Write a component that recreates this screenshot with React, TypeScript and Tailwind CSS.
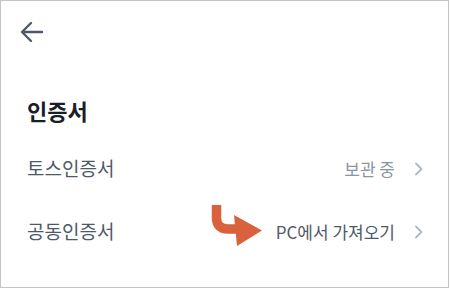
function BackArrow() {
  return (
    <svg width="24" height="22" viewBox="0 0 24 22" fill="none">
      <path d="M22 11H2.5M11 2L2 11l9 9" stroke="#4e5968" strokeWidth="2.4" strokeLinecap="round" strokeLinejoin="round" />
    </svg>
  );
}

function Chevron() {
  return (
    <svg width="10" height="14" viewBox="0 0 10 14" fill="none">
      <path d="M2 1.5L7.5 7 2 12.5" stroke="#b0b8c1" strokeWidth="1.8" strokeLinecap="round" strokeLinejoin="round" />
    </svg>
  );
}

function PointerArrow() {
  return (
    <svg width="56" height="46" viewBox="0 0 56 46" fill="none">
      <path d="M6.5 2v13c0 7 4 11 11 11H31" stroke="#d9623d" strokeWidth="9.5" />
      <path d="M24 12l28 15.5L27 43z" fill="#d9623d" />
    </svg>
  );
}

function Row({ label, value, valueClass, children }: { label: string; value: string; valueClass: string; children?: React.ReactNode }) {
  return (
    <div className="relative flex h-[63px] items-center justify-between">
      <span className="text-[19px] text-[#4e5968]">{label}</span>
      <div className="flex items-center gap-[19px]">
        <span className={`text-[17px] ${valueClass}`}>{value}</span>
        <Chevron />
      </div>
      {children}
    </div>
  );
}

export default function App() {
  return (
    <div
      className="h-[288px] w-[449px] border border-[#c4c4c4] bg-white"
      style={{ fontFamily: '"Noto Sans CJK KR", "Noto Sans", sans-serif' }}
    >
      <div className="flex h-[61px] items-center pl-[19px]">
        <BackArrow />
      </div>
      <div className="pl-[26px] pr-[24px]">
        <h1 className="mt-[33px] h-[30px] text-[22px] font-bold leading-[30px] text-[#191f28]">인증서</h1>
        <div className="mt-[12px]">
          <Row label="토스인증서" value="보관 중" valueClass="text-[#8b95a1]" />
          <Row label="공동인증서" value="PC에서 가져오기" valueClass="text-[#4e5968]">
            <div className="absolute left-[183px] top-[3px]">
              <PointerArrow />
            </div>
          </Row>
        </div>
      </div>
    </div>
  );
}
